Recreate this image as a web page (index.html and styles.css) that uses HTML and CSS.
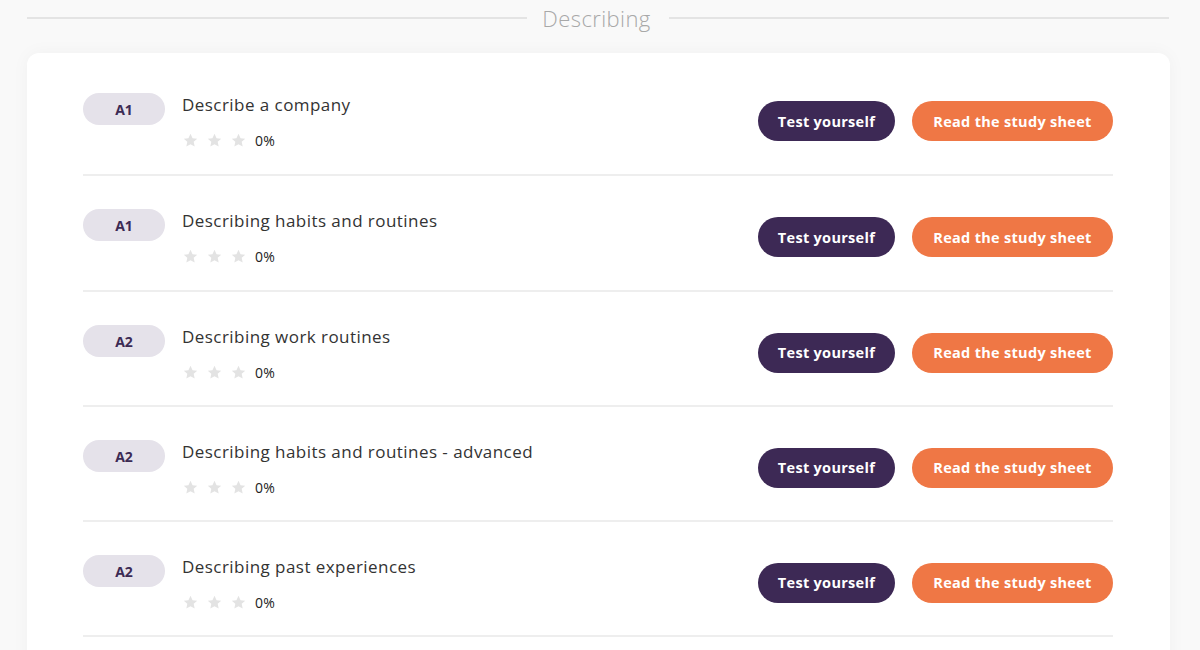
FILE: index.html
```html
<!DOCTYPE html>
<html lang="en">
<head>
    <meta charset="UTF-8">
    <meta name="viewport" content="width=device-width, initial-scale=1">
    <title>Describing</title>
    <link rel="stylesheet" href="styles.css">
</head>
<body>
    <main class="page">
        <!-- === SECTION TITLE === -->
        <h2 class="divider-title"><span>Describing</span></h2>

        <!-- === LESSON LIST === -->
        <section class="card">
            <div class="lesson">
                <span class="level">A1</span>
                <div class="lesson-info">
                    <h3 class="lesson-title">Describe a company</h3>
                    <div class="progress">
                        <span class="stars">
                            <svg viewBox="0 0 24 24"><path d="M12 2.5l2.9 6.2 6.6.7-5 4.5 1.4 6.6L12 17.2l-5.9 3.3 1.4-6.6-5-4.5 6.6-.7z"/></svg>
                            <svg viewBox="0 0 24 24"><path d="M12 2.5l2.9 6.2 6.6.7-5 4.5 1.4 6.6L12 17.2l-5.9 3.3 1.4-6.6-5-4.5 6.6-.7z"/></svg>
                            <svg viewBox="0 0 24 24"><path d="M12 2.5l2.9 6.2 6.6.7-5 4.5 1.4 6.6L12 17.2l-5.9 3.3 1.4-6.6-5-4.5 6.6-.7z"/></svg>
                        </span>
                        <span class="percent">0%</span>
                    </div>
                </div>
                <div class="actions">
                    <button class="btn btn-dark">Test yourself</button>
                    <button class="btn btn-orange">Read the study sheet</button>
                </div>
            </div>

            <div class="lesson">
                <span class="level">A1</span>
                <div class="lesson-info">
                    <h3 class="lesson-title">Describing habits and routines</h3>
                    <div class="progress">
                        <span class="stars">
                            <svg viewBox="0 0 24 24"><path d="M12 2.5l2.9 6.2 6.6.7-5 4.5 1.4 6.6L12 17.2l-5.9 3.3 1.4-6.6-5-4.5 6.6-.7z"/></svg>
                            <svg viewBox="0 0 24 24"><path d="M12 2.5l2.9 6.2 6.6.7-5 4.5 1.4 6.6L12 17.2l-5.9 3.3 1.4-6.6-5-4.5 6.6-.7z"/></svg>
                            <svg viewBox="0 0 24 24"><path d="M12 2.5l2.9 6.2 6.6.7-5 4.5 1.4 6.6L12 17.2l-5.9 3.3 1.4-6.6-5-4.5 6.6-.7z"/></svg>
                        </span>
                        <span class="percent">0%</span>
                    </div>
                </div>
                <div class="actions">
                    <button class="btn btn-dark">Test yourself</button>
                    <button class="btn btn-orange">Read the study sheet</button>
                </div>
            </div>

            <div class="lesson">
                <span class="level">A2</span>
                <div class="lesson-info">
                    <h3 class="lesson-title">Describing work routines</h3>
                    <div class="progress">
                        <span class="stars">
                            <svg viewBox="0 0 24 24"><path d="M12 2.5l2.9 6.2 6.6.7-5 4.5 1.4 6.6L12 17.2l-5.9 3.3 1.4-6.6-5-4.5 6.6-.7z"/></svg>
                            <svg viewBox="0 0 24 24"><path d="M12 2.5l2.9 6.2 6.6.7-5 4.5 1.4 6.6L12 17.2l-5.9 3.3 1.4-6.6-5-4.5 6.6-.7z"/></svg>
                            <svg viewBox="0 0 24 24"><path d="M12 2.5l2.9 6.2 6.6.7-5 4.5 1.4 6.6L12 17.2l-5.9 3.3 1.4-6.6-5-4.5 6.6-.7z"/></svg>
                        </span>
                        <span class="percent">0%</span>
                    </div>
                </div>
                <div class="actions">
                    <button class="btn btn-dark">Test yourself</button>
                    <button class="btn btn-orange">Read the study sheet</button>
                </div>
            </div>

            <div class="lesson">
                <span class="level">A2</span>
                <div class="lesson-info">
                    <h3 class="lesson-title">Describing habits and routines - advanced</h3>
                    <div class="progress">
                        <span class="stars">
                            <svg viewBox="0 0 24 24"><path d="M12 2.5l2.9 6.2 6.6.7-5 4.5 1.4 6.6L12 17.2l-5.9 3.3 1.4-6.6-5-4.5 6.6-.7z"/></svg>
                            <svg viewBox="0 0 24 24"><path d="M12 2.5l2.9 6.2 6.6.7-5 4.5 1.4 6.6L12 17.2l-5.9 3.3 1.4-6.6-5-4.5 6.6-.7z"/></svg>
                            <svg viewBox="0 0 24 24"><path d="M12 2.5l2.9 6.2 6.6.7-5 4.5 1.4 6.6L12 17.2l-5.9 3.3 1.4-6.6-5-4.5 6.6-.7z"/></svg>
                        </span>
                        <span class="percent">0%</span>
                    </div>
                </div>
                <div class="actions">
                    <button class="btn btn-dark">Test yourself</button>
                    <button class="btn btn-orange">Read the study sheet</button>
                </div>
            </div>

            <div class="lesson">
                <span class="level">A2</span>
                <div class="lesson-info">
                    <h3 class="lesson-title">Describing past experiences</h3>
                    <div class="progress">
                        <span class="stars">
                            <svg viewBox="0 0 24 24"><path d="M12 2.5l2.9 6.2 6.6.7-5 4.5 1.4 6.6L12 17.2l-5.9 3.3 1.4-6.6-5-4.5 6.6-.7z"/></svg>
                            <svg viewBox="0 0 24 24"><path d="M12 2.5l2.9 6.2 6.6.7-5 4.5 1.4 6.6L12 17.2l-5.9 3.3 1.4-6.6-5-4.5 6.6-.7z"/></svg>
                            <svg viewBox="0 0 24 24"><path d="M12 2.5l2.9 6.2 6.6.7-5 4.5 1.4 6.6L12 17.2l-5.9 3.3 1.4-6.6-5-4.5 6.6-.7z"/></svg>
                        </span>
                        <span class="percent">0%</span>
                    </div>
                </div>
                <div class="actions">
                    <button class="btn btn-dark">Test yourself</button>
                    <button class="btn btn-orange">Read the study sheet</button>
                </div>
            </div>
        </section>
    </main>
</body>
</html>
```

FILE: styles.css
```css
/* === BASE STYLES === */
* {
    margin: 0;
    padding: 0;
    box-sizing: border-box;
}

body {
    font-family: 'Open Sans', 'DejaVu Sans', sans-serif;
    background: #f9f9f9;
    color: #333;
    overflow: hidden;
}

/* === LAYOUT === */
.page {
    padding: 5px 30px 0 27px;
}

.divider-title {
    display: flex;
    align-items: center;
    gap: 18px;
    font-size: 22px;
    font-weight: 300;
    color: #a8a8a8;
    line-height: 26px;
    letter-spacing: 0.4px;
    margin-bottom: 22px;
    margin-right: 1px;
}

.divider-title::before,
.divider-title::after {
    content: '';
    flex: 1;
    height: 2px;
    background: #e4e4e4;
}

.divider-title span {
    margin: 0 0 0 -3px;
}

.card {
    background: #fff;
    border-radius: 12px;
    box-shadow: 0 0 18px rgba(0, 0, 0, 0.04);
    padding: 8px 57px 0 56px;
    height: 640px;
}

/* === LESSON ROWS === */
.lesson {
    display: flex;
    align-items: flex-start;
    padding: 33px 0 25px;
    border-bottom: 2px solid #eeeeee;
    height: 115px;
}

.lesson:first-child {
    padding-top: 32px;
}

.lesson:nth-child(2) {
    height: 116px;
}

.level {
    flex: none;
    width: 82px;
    height: 32px;
    border-radius: 16px;
    background: #e5e2ea;
    color: #3c2a54;
    font-size: 14px;
    font-weight: 700;
    display: flex;
    align-items: center;
    justify-content: center;
}

.lesson-info {
    flex: 1;
    margin-left: 17px;
}

.lesson-title {
    font-size: 17px;
    font-weight: 400;
    color: #333;
    line-height: 24px;
    letter-spacing: 0.45px;
}

.progress {
    display: flex;
    align-items: center;
    margin-top: 12px;
    height: 22px;
}

.stars {
    display: flex;
    gap: 7px;
}

.stars svg {
    width: 17px;
    height: 17px;
    fill: #e3e3e3;
}

.percent {
    font-size: 14px;
    color: #222;
    margin-left: 8px;
    letter-spacing: 0.3px;
}

/* === BUTTONS === */
.actions {
    display: flex;
    gap: 17px;
    align-self: center;
}

.btn {
    height: 40px;
    border-radius: 20px;
    border: none;
    color: #fff;
    font-family: inherit;
    font-size: 14.5px;
    font-weight: 700;
    letter-spacing: 0.3px;
    cursor: pointer;
}

.btn-dark {
    background: #3d2955;
    width: 137px;
}

.btn-orange {
    background: #ef7745;
    width: 201px;
}
```
